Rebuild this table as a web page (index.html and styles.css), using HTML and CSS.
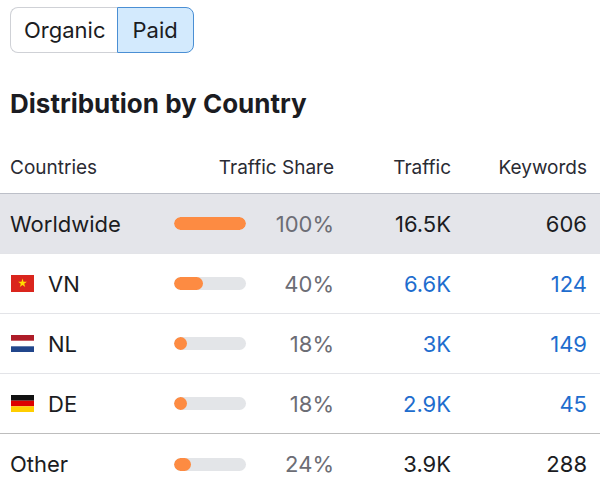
FILE: index.html
```html
<!DOCTYPE html>
<html>
<head>
<meta charset="utf-8">
<link rel="stylesheet" href="styles.css">
</head>
<body>
<div class="page">
  <div class="toggle">
    <span class="seg seg-off">Organic</span>
    <span class="seg seg-on">Paid</span>
  </div>
  <h2 class="title">Distribution by Country</h2>
  <div class="table">
    <div class="row head">
      <div class="c-name">Countries</div>
      <div class="c-share">Traffic Share</div>
      <div class="c-num">Traffic</div>
      <div class="c-num">Keywords</div>
    </div>
    <div class="row ww">
      <div class="c-name">Worldwide</div>
      <div class="bar"><div class="fill" style="width:100%"></div></div>
      <div class="pct">100%</div>
      <div class="c-num">16.5K</div>
      <div class="c-num">606</div>
    </div>
    <div class="row">
      <div class="c-name"><svg class="flag" viewBox="0 0 23 17"><rect width="23" height="17" fill="#da251d"/><polygon fill="#ffdd00" points="11.5,3.6 12.5,6.8 15.9,6.8 13.2,8.8 14.2,12 11.5,10 8.8,12 9.8,8.8 7.1,6.8 10.5,6.8"/></svg><span class="code">VN</span></div>
      <div class="bar"><div class="fill" style="width:40%"></div></div>
      <div class="pct">40%</div>
      <div class="c-num link">6.6K</div>
      <div class="c-num link">124</div>
    </div>
    <div class="row">
      <div class="c-name"><svg class="flag" viewBox="0 0 23 17"><rect width="23" height="17" fill="#fff"/><rect width="23" height="5.7" fill="#ae1c28"/><rect y="11.3" width="23" height="5.7" fill="#21468b"/></svg><span class="code">NL</span></div>
      <div class="bar"><div class="fill" style="width:18%"></div></div>
      <div class="pct">18%</div>
      <div class="c-num link">3K</div>
      <div class="c-num link">149</div>
    </div>
    <div class="row sep">
      <div class="c-name"><svg class="flag" viewBox="0 0 23 17"><rect width="23" height="5.7" fill="#111"/><rect y="5.7" width="23" height="5.6" fill="#dd0000"/><rect y="11.3" width="23" height="5.7" fill="#ffce00"/></svg><span class="code">DE</span></div>
      <div class="bar"><div class="fill" style="width:18%"></div></div>
      <div class="pct">18%</div>
      <div class="c-num link">2.9K</div>
      <div class="c-num link">45</div>
    </div>
    <div class="row last">
      <div class="c-name">Other</div>
      <div class="bar"><div class="fill" style="width:24%"></div></div>
      <div class="pct">24%</div>
      <div class="c-num">3.9K</div>
      <div class="c-num">288</div>
    </div>
  </div>
</div>
</body>
</html>
```
FILE: styles.css
```css
* { box-sizing: border-box; }
html, body { margin: 0; padding: 0; background: #fff; }
body { font-family: Inter, "Noto Sans", sans-serif; color: #1b1c22; }
.page { width: 600px; padding-top: 7px; }
.toggle { display: flex; margin-left: 10px; height: 46px; }
.seg {
  display: flex; align-items: center; font-size: 22px; height: 46px;
  padding: 0 13px; border: 1px solid #cfd1d6;
}
.seg-off { border-radius: 8px 0 0 8px; border-right: none; background: #fff; padding-right: 12px; }
.seg-on { border-radius: 0 8px 8px 0; border-color: #4a8fd4; background: #d3eafd; padding: 0 15px 0 14px; }
.title { margin: 35px 0 0 10px; font-size: 26px; font-weight: 700; line-height: 32px; }
.table { margin-top: 22px; }
.row {
  display: grid;
  grid-template-columns: 164px 72px 88px 117px 136px;
  padding: 0 13px 0 10px;
  align-items: center;
  height: 60px;
  border-bottom: 1px solid #e3e4e8;
  font-size: 22px;
}
.row.head { height: 52px; font-size: 19px; color: #2a2b33; border-bottom-color: #bcbfc8; }
.row.ww { background: #e4e5ea; }
.row.sep { border-bottom-color: #bdbdbd; }
.row.last { border-bottom: none; }
.c-name { display: flex; align-items: center; }
.c-share { grid-column: 2 / 4; text-align: right; }
.c-num { text-align: right; }
.pct { text-align: right; color: #6c6d75; }
.link { color: #1e6dce; }
.bar { height: 13px; border-radius: 7px; background: #e3e5e8; overflow: hidden; }
.fill { height: 13px; min-width: 13px; border-radius: 7px; background: #fd8b42; }
.flag { width: 23px; height: 17px; display: block; margin-left: 1px; }
.code { margin-left: 14px; }
```
